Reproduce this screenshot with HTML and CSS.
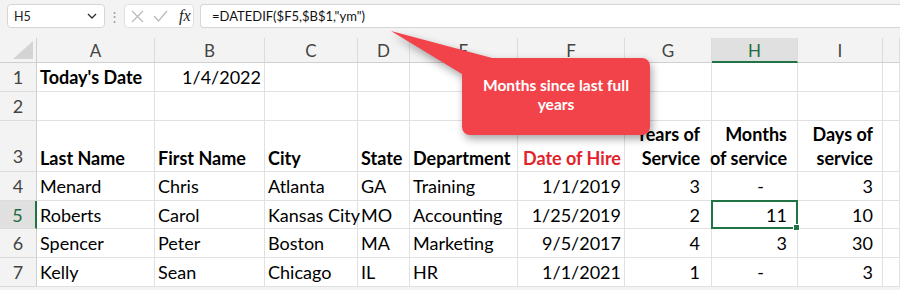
FILE: index.html
```html
<!DOCTYPE html>
<html lang="en">
<head>
    <meta charset="UTF-8">
    <title>Service months</title>
    <link rel="stylesheet" href="styles.css">
</head>
<body>

<div class="formula-bar">
    <div class="name-box">
        <span>H5</span>
        <svg class="chevron" width="10" height="6" viewBox="0 0 10 6"><path d="M1 1 L5 5 L9 1" fill="none" stroke="#333" stroke-width="1.4"/></svg>
    </div>
    <span class="dots">⋮</span>
    <div class="fx-box">
        <svg width="13" height="13" viewBox="0 0 13 13"><path d="M1 1 L12 12 M12 1 L1 12" stroke="#b9b9b9" stroke-width="1.2"/></svg>
        <svg width="15" height="12" viewBox="0 0 15 12"><path d="M1 6 L5.5 11 L14 1" fill="none" stroke="#b9b9b9" stroke-width="1.2"/></svg>
        <span class="fx">fx</span>
    </div>
    <div class="formula">=DATEDIF($F5,$B$1,"ym")</div>
</div>

<div class="sheet">
    <!-- column headers -->
    <div class="corner"><span></span></div>
    <div class="col-head">A</div>
    <div class="col-head">B</div>
    <div class="col-head">C</div>
    <div class="col-head">D</div>
    <div class="col-head">E</div>
    <div class="col-head">F</div>
    <div class="col-head">G</div>
    <div class="col-head active">H</div>
    <div class="col-head">I</div>
    <div class="col-head"></div>

    <!-- row 1 -->
    <div class="row-head">1</div>
    <div class="cell bold">Today's Date</div>
    <div class="cell num">1/4/2022</div>
    <div class="cell"></div><div class="cell"></div><div class="cell"></div><div class="cell"></div>
    <div class="cell"></div><div class="cell"></div><div class="cell"></div><div class="cell"></div>

    <!-- row 2 -->
    <div class="row-head">2</div>
    <div class="cell"></div><div class="cell"></div><div class="cell"></div><div class="cell"></div><div class="cell"></div>
    <div class="cell"></div><div class="cell"></div><div class="cell"></div><div class="cell"></div><div class="cell"></div>

    <!-- row 3 -->
    <div class="row-head tall">3</div>
    <div class="cell tall bold">Last Name</div>
    <div class="cell tall bold">First Name</div>
    <div class="cell tall bold">City</div>
    <div class="cell tall bold">State</div>
    <div class="cell tall bold">Department</div>
    <div class="cell tall bold num red">Date of Hire</div>
    <div class="cell tall bold num pad-g">Years of<br>Service</div>
    <div class="cell tall bold num pad-h">Months<br>of service</div>
    <div class="cell tall bold num pad-i">Days of<br>service</div>
    <div class="cell tall"></div>

    <!-- row 4 -->
    <div class="row-head">4</div>
    <div class="cell">Menard</div>
    <div class="cell">Chris</div>
    <div class="cell">Atlanta</div>
    <div class="cell">GA</div>
    <div class="cell">Training</div>
    <div class="cell num">1/1/2019</div>
    <div class="cell num pad-g">3</div>
    <div class="cell num dash">-</div>
    <div class="cell num pad-i">3</div>
    <div class="cell"></div>

    <!-- row 5 -->
    <div class="row-head active">5</div>
    <div class="cell">Roberts</div>
    <div class="cell">Carol</div>
    <div class="cell">Kansas City</div>
    <div class="cell">MO</div>
    <div class="cell">Accounting</div>
    <div class="cell num">1/25/2019</div>
    <div class="cell num pad-g">2</div>
    <div class="cell num pad-h selected">11</div>
    <div class="cell num pad-i">10</div>
    <div class="cell"></div>

    <!-- row 6 -->
    <div class="row-head">6</div>
    <div class="cell">Spencer</div>
    <div class="cell">Peter</div>
    <div class="cell">Boston</div>
    <div class="cell">MA</div>
    <div class="cell">Marketing</div>
    <div class="cell num">9/5/2017</div>
    <div class="cell num pad-g">4</div>
    <div class="cell num pad-h">3</div>
    <div class="cell num pad-i">30</div>
    <div class="cell"></div>

    <!-- row 7 -->
    <div class="row-head">7</div>
    <div class="cell">Kelly</div>
    <div class="cell">Sean</div>
    <div class="cell">Chicago</div>
    <div class="cell">IL</div>
    <div class="cell">HR</div>
    <div class="cell num">1/1/2021</div>
    <div class="cell num pad-g">1</div>
    <div class="cell num dash">-</div>
    <div class="cell num pad-i">3</div>
    <div class="cell"></div>
</div>

<!-- annotation callout -->
<svg class="callout-shape" width="900" height="290" viewBox="0 0 900 290">
    <rect x="462" y="58" width="188" height="77" rx="8" fill="#f2434a"/>
    <polygon points="391,31 494,58.5 462,74" fill="#f2434a"/>
</svg>
<div class="callout-text">Months since last full<br>years</div>

</body>
</html>
```

FILE: styles.css
```css
* {
    margin: 0;
    padding: 0;
    box-sizing: border-box;
}

body {
    width: 900px;
    height: 290px;
    overflow: hidden;
    background-color: #f3f3f3;
    font-family: Lato, "Liberation Sans", sans-serif;
    position: relative;
}

.formula-bar {
    height: 38px;
    display: flex;
    align-items: flex-start;
    padding-top: 4px;
    padding-left: 7px;
}

.name-box {
    width: 98px;
    height: 24px;
    background-color: #fff;
    border: 1px solid #d6d6d6;
    border-radius: 4px;
    display: flex;
    align-items: center;
    justify-content: space-between;
    padding: 0 7px 0 6px;
    font-size: 12.5px;
    color: #222;
}

.dots {
    width: 19px;
    text-align: center;
    color: #999;
    font-size: 13px;
    line-height: 24px;
}

.fx-box {
    width: 70px;
    height: 24px;
    background-color: #fff;
    border: 1px solid #e0e0e0;
    border-radius: 4px;
    display: flex;
    align-items: center;
    gap: 9px;
    padding-left: 6px;
}

.fx {
    font-family: "Liberation Serif", serif;
    font-style: italic;
    font-size: 16px;
    color: #222;
    margin-left: 2px;
}

.formula {
    flex: 1;
    height: 24px;
    margin-left: 6px;
    background-color: #fff;
    border: 1px solid #d6d6d6;
    border-right: none;
    border-radius: 4px 0 0 4px;
    padding-left: 11px;
    font-size: 13px;
    line-height: 22px;
    color: #111;
}

.sheet {
    display: grid;
    grid-template-columns: 37px 118px 110px 93px 52px 108px 107px 87px 86px 85px 1fr;
    grid-template-rows: 25px 29px 29px 51px 29px 28px 29px 29px;
    background-color: #fff;
}

.corner {
    background-color: #f3f3f3;
    border-right: 1px solid #cfcfcf;
    border-bottom: 1px solid #cfcfcf;
    padding: 3px 4px 3px 13px;
}

.corner span {
    display: block;
    width: 20px;
    height: 18px;
    background-color: #d4d4d4;
    clip-path: polygon(100% 0, 100% 100%, 0 100%);
}

.col-head {
    background-color: #f3f3f3;
    border-right: 1px solid #dcdcdc;
    border-bottom: 1px solid #cfcfcf;
    text-align: center;
    font-size: 17px;
    line-height: 25px;
    color: #444;
}

.col-head.active {
    background-color: #e0e0e0;
    color: #1f6b42;
    border-bottom: 2px solid #217346;
}

.row-head {
    background-color: #f3f3f3;
    border-right: 1px solid #cfcfcf;
    border-bottom: 1px solid #dcdcdc;
    text-align: center;
    font-size: 18px;
    line-height: 28px;
    color: #444;
}

.row-head.tall {
    display: flex;
    align-items: flex-end;
    justify-content: center;
    padding-bottom: 1px;
}

.row-head.active {
    background-color: #e0e0e0;
    color: #1f6b42;
    border-right: 2px solid #217346;
}

.cell {
    border-right: 1px solid #e1e1e1;
    border-bottom: 1px solid #e1e1e1;
    padding: 0 3px;
    font-size: 18px;
    line-height: 28px;
    color: #000;
    white-space: nowrap;
}

.cell.tall {
    display: flex;
    flex-direction: column;
    justify-content: flex-end;
    line-height: 24px;
    padding-bottom: 1px;
}

.cell.tall.num {
    align-items: flex-end;
}

.bold {
    font-weight: 700;
}

.num {
    text-align: right;
}

.red {
    color: #e2232b;
}

.pad-g {
    padding-right: 11px;
}

.pad-h {
    padding-right: 10px;
}

.pad-i {
    padding-right: 9px;
}

.dash {
    padding-right: 33px;
}

.selected {
    position: relative;
}

.selected::after {
    content: "";
    position: absolute;
    left: -1px;
    top: -1px;
    right: -1px;
    bottom: -1px;
    border: 2px solid #217346;
}

.selected::before {
    content: "";
    position: absolute;
    right: -3px;
    bottom: -3px;
    width: 5px;
    height: 5px;
    background-color: #217346;
    border: 1px solid #fff;
    z-index: 1;
}

.callout-shape {
    position: absolute;
    left: 0;
    top: 0;
    pointer-events: none;
    filter: drop-shadow(2px 4px 4px rgba(0, 0, 0, 0.35));
}

.callout-text {
    position: absolute;
    left: 462px;
    top: 76px;
    width: 188px;
    text-align: center;
    color: #fff;
    font-weight: 700;
    font-size: 15.5px;
    line-height: 19px;
}
```
